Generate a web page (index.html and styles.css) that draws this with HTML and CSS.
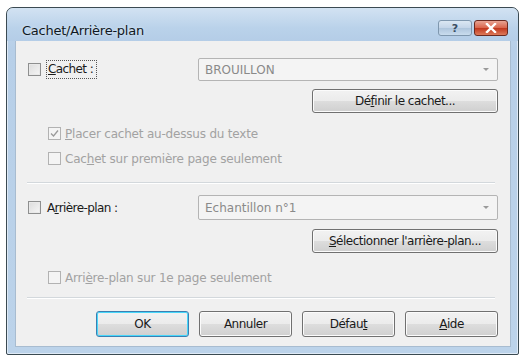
FILE: index.html
```html
<!DOCTYPE html>
<html lang="fr">
<head>
<meta charset="utf-8">
<title>Cachet/Arrière-plan</title>
<link rel="stylesheet" href="styles.css">
</head>
<body>
<div class="window">
  <div class="titlebar">
    <span class="title">Cachet/Arrière-plan</span>
    <div class="caption-btns">
      <span class="cap cap-help">?</span>
      <span class="cap cap-close">
        <svg width="12" height="10" viewBox="0 0 12 10"><path d="M2 1 L10 9 M10 1 L2 9" stroke="#fff" stroke-width="2.4" stroke-linecap="square"/></svg>
      </span>
    </div>
  </div>
  <div class="client">
    <div class="row-main">
      <label class="chk-label"><span class="box"></span><span class="focus"><u>C</u>achet :</span></label>
      <div class="combo"><span>BROUILLON</span><span class="arrow"></span></div>
    </div>
    <div class="row-btn"><button class="btn wide">Dé<u>f</u>inir le cachet...</button></div>
    <div class="opt disabled opt1"><span class="box checked"><svg width="9" height="9" viewBox="0 0 9 9"><path d="M1 4.5 L3.5 7 L8 1.5" fill="none" stroke="#9a9a9a" stroke-width="1.3"/></svg></span><span><u>P</u>lacer cachet au-dessus du texte</span></div>
    <div class="opt disabled"><span class="box"></span><span>Cac<u>h</u>et sur première page seulement</span></div>
    <div class="sep sep1"></div>
    <div class="row-main row2">
      <label class="chk-label"><span class="box"></span><span class="plain">A<u>r</u>rière-plan :</span></label>
      <div class="combo"><span>Echantillon n°1</span><span class="arrow"></span></div>
    </div>
    <div class="row-btn row-btn2"><button class="btn wide"><u>S</u>électionner l'arrière-plan...</button></div>
    <div class="opt disabled opt3"><span class="box"></span><span>Arri<u>è</u>re-plan sur 1e page seulement</span></div>
    <div class="sep sep2"></div>
    <div class="footer">
      <button class="btn foot default">OK</button>
      <button class="btn foot">Annuler</button>
      <button class="btn foot">Défau<u>t</u></button>
      <button class="btn foot"><u>A</u>ide</button>
    </div>
  </div>
</div>
</body>
</html>
```

FILE: styles.css
```css
html, body {
  margin: 0;
  padding: 0;
  background: #ffffff;
}
body {
  font-family: "DejaVu Sans", Verdana, sans-serif;
  font-size: 12px;
  color: #1a1a1a;
}
.window {
  margin: 7px 0 0 6px;
  width: 511px;
  height: 346px;
  border: 1px solid #3b4a52;
  border-radius: 7px 7px 2px 2px;
  background: linear-gradient(#c6dbef, #b7cfe8 40px, #bcd3ea);
  display: flex;
  flex-direction: column;
  box-shadow: inset 0 0 0 1px #dfeaf6;
}
.titlebar {
  height: 33px;
  display: flex;
  align-items: flex-start;
  justify-content: space-between;
  padding: 0 10px 0 15px;
  background: linear-gradient(#d2e2f2, #bad2ea 60%, #b4cde7);
  border-radius: 7px 7px 0 0;
}
.title {
  margin-top: 15px;
  font-family: "DejaVu Sans", sans-serif;
  font-size: 13px;
  color: #0f1822;
  letter-spacing: -0.25px;
  text-shadow: 0 0 3px #e6f0fa;
}
.caption-btns {
  display: flex;
  gap: 2px;
  margin-top: 12px;
}
.cap {
  width: 34px;
  height: 16px;
  display: flex;
  align-items: center;
  justify-content: center;
  border: 1px solid #7f97ae;
  border-radius: 3px;
  box-sizing: border-box;
}
.cap-help {
  background: linear-gradient(#dbe7f3, #c3d5e8 50%, #aec5dc 51%, #c9dcee);
  color: #3a4d62;
  font-weight: bold;
  font-size: 11px;
  line-height: 1;
}
.cap-close {
  background: linear-gradient(#e8a493, #d9634a 50%, #c0361c 51%, #dd7a5a);
  border-color: #6b2a20;
}
.client {
  flex: 1;
  margin: 0 7px 7px 8px;
  background: #f0f0f0;
  padding: 17px 12px 0 12px;
  border: 1px solid #a8bcd0;
  border-top: none;
  box-sizing: border-box;
  display: flex;
  flex-direction: column;
}
.row-main {
  display: flex;
  align-items: center;
  justify-content: space-between;
  height: 23px;
}
.chk-label {
  display: flex;
  align-items: center;
  gap: 4px;
}
.box {
  width: 13px;
  height: 13px;
  box-sizing: border-box;
  border: 1px solid #8e8f8f;
  background: linear-gradient(135deg, #dcdcdc, #f6f6f6);
  box-shadow: inset 0 0 0 1px #e9e9e9;
  display: inline-flex;
  align-items: center;
  justify-content: center;
  flex: none;
}
.focus {
  border: 1px dotted #555;
  padding: 2px 3px 2px 1px;
  margin-left: 1px;
  line-height: 13px;
  letter-spacing: -0.6px;
}
.plain {
  padding: 3px 2px 3px 1px;
  margin-left: 1px;
  letter-spacing: -0.6px;
}
.combo {
  width: 300px;
  height: 23px;
  box-sizing: border-box;
  border: 1px solid #b4b4b4;
  border-radius: 2px;
  background: #f4f4f4;
  color: #8a8a8a;
  display: flex;
  align-items: center;
  justify-content: space-between;
  padding: 0 8px 0 6px;
}
.arrow {
  width: 0;
  height: 0;
  border-left: 3px solid transparent;
  border-right: 3px solid transparent;
  border-top: 3px solid #9a9a9a;
}
.row-btn {
  display: flex;
  justify-content: flex-end;
  margin-top: 8px;
}
.btn {
  font-family: "DejaVu Sans", Verdana, sans-serif;
  font-size: 12px;
  color: #1a1a1a;
  height: 24px;
  border: 1px solid #707070;
  border-radius: 3px;
  background: linear-gradient(#f2f2f2, #ebebeb 50%, #dddddd 51%, #cfcfcf);
  box-shadow: inset 0 0 0 1px #fbfbfb;
  padding: 0;
  letter-spacing: -0.5px;
}
.wide {
  width: 186px;
}
.opt {
  display: flex;
  align-items: center;
  gap: 4px;
  height: 25px;
  padding-left: 20px;
  letter-spacing: -0.2px;
}
.opt1 {
  margin-top: 8px;
}
.disabled {
  color: #a2a2a2;
}
.disabled .box {
  border-color: #b2b2b2;
  background: #f4f4f4;
  box-shadow: none;
}
.sep {
  height: 1px;
  background: #d3d8dc;
  border-bottom: 1px solid #ffffff;
  margin-left: -1px;
  margin-right: 3px;
}
.sep1 {
  margin-top: 11px;
}
.row2 {
  margin-top: 11px;
  height: 25px;
}
.row2 .combo {
  height: 25px;
}
.row-btn2 {
  margin-top: 9px;
}
.opt3 {
  margin-top: 12px;
}
.sep2 {
  margin-top: 7px;
}
.footer {
  display: flex;
  justify-content: flex-end;
  gap: 10px;
  margin-top: 12px;
}
.foot {
  width: 93px;
  height: 26px;
}
.default {
  border-color: #3c7fb1;
  box-shadow: inset 0 0 0 1px #48d7fa;
}
u {
  text-decoration: underline;
  text-underline-offset: 1px;
}
```
